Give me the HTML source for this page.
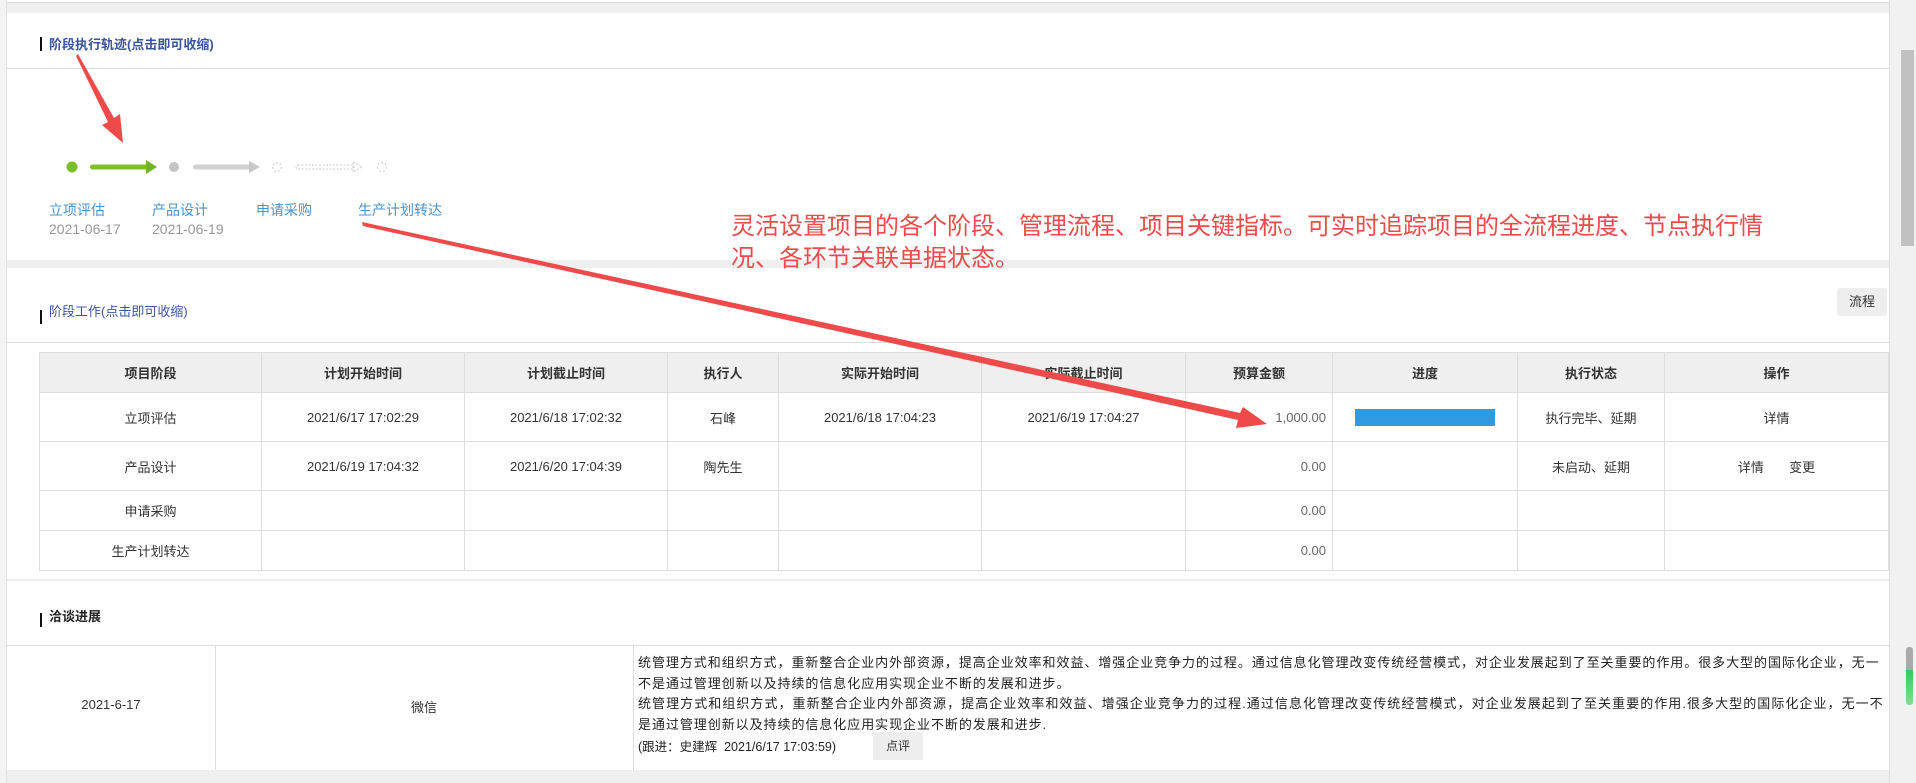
<!DOCTYPE html>
<html><head><meta charset="utf-8"><style>
*{margin:0;padding:0;box-sizing:border-box}
body{width:1916px;height:783px;background:#efefef;position:relative;overflow:hidden;font-family:"Liberation Sans","Noto Sans CJK SC",sans-serif;font-size:13px;color:#333}
.a{position:absolute}
.panel{position:absolute;left:7px;width:1882px;background:#fff}
.bar{position:absolute;width:2px;background:#111}
table{position:absolute;border-collapse:collapse;table-layout:fixed}
td,th{border:1px solid #ddd;text-align:center;font-size:13px;color:#333}
th{background:#efefef;font-weight:bold}
</style></head><body>
<div class="a" style="left:0;top:0;width:1889px;height:3px;background:#fff;border-bottom:1px solid #ddd"></div>
<div class="a" style="left:0;top:0;width:7px;height:783px;background:#f3f3f3;border-right:1px solid #e2e2e2"></div>

<div class="panel" style="top:13px;height:247px">
 <div class="a" style="left:0;top:55px;width:100%;height:1px;background:#ddd"></div>
</div>
<div class="bar" style="left:40px;top:37px;height:14px"></div>
<div class="a" style="left:49px;top:34px;font-size:13px;font-weight:bold;color:#3a55a0">阶段执行轨迹(点击即可收缩)</div>
<svg class="a" style="left:60px;top:155px" width="340" height="24">
 <circle cx="12" cy="12" r="5.5" fill="#7cbf2a"/>
 <rect x="30" y="9.5" width="58" height="5" rx="2.5" fill="#7cbf2a"/>
 <polygon points="86,5 97,12 86,19" fill="#6fb51e"/>
 <circle cx="114" cy="12" r="5" fill="#c4c4c4"/>
 <rect x="133" y="9.5" width="58" height="5" rx="2.5" fill="#d0d0d0"/>
 <polygon points="189,6 200,12 189,18" fill="#c8c8c8"/>
 <circle cx="217" cy="12" r="4.5" fill="none" stroke="#ccc" stroke-dasharray="2,2"/>
 <rect x="236" y="10" width="58" height="4" rx="2" fill="none" stroke="#ccc" stroke-dasharray="2,1.5"/>
 <polygon points="293,7 302,12 293,17" fill="none" stroke="#ccc" stroke-dasharray="2,1.5"/>
 <circle cx="322" cy="12" r="4.5" fill="none" stroke="#ccc" stroke-dasharray="2,2"/>
</svg>
<div class="a" style="left:49px;top:201px;font-size:14px;color:#4a93cf;line-height:19px">立项评估<br><span style="color:#999">2021-06-17</span></div>
<div class="a" style="left:152px;top:201px;font-size:14px;color:#4a93cf;line-height:19px">产品设计<br><span style="color:#999">2021-06-19</span></div>
<div class="a" style="left:256px;top:201px;font-size:14px;color:#4a93cf;line-height:19px">申请采购</div>
<div class="a" style="left:358px;top:201px;font-size:14px;color:#4a93cf;line-height:19px">生产计划转达</div>

<div class="panel" style="top:268px;height:311px">
 <div class="a" style="left:0;top:74px;width:100%;height:1px;background:#ddd"></div>
</div>
<div class="bar" style="left:40px;top:310px;height:14px"></div>
<div class="a" style="left:49px;top:301px;font-size:13px;color:#3a55a0">阶段工作(点击即可收缩)</div>
<div class="a" style="left:1837px;top:288px;width:50px;height:28px;background:#eee;border-radius:3px;text-align:center;line-height:28px;font-size:13px">流程</div>
<table style="left:39px;top:352px;width:1849px">
<colgroup><col style="width:222px"><col style="width:203px"><col style="width:203px"><col style="width:111px"><col style="width:203px"><col style="width:204px"><col style="width:147px"><col style="width:185px"><col style="width:147px"><col style="width:224px"></colgroup>
<tr style="height:40px"><th>项目阶段</th><th>计划开始时间</th><th>计划截止时间</th><th>执行人</th><th>实际开始时间</th><th>实际截止时间</th><th>预算金额</th><th>进度</th><th>执行状态</th><th>操作</th></tr>
<tr style="height:49px"><td>立项评估</td><td>2021/6/17 17:02:29</td><td>2021/6/18 17:02:32</td><td>石峰</td><td>2021/6/18 17:04:23</td><td>2021/6/19 17:04:27</td><td style="text-align:right;padding-right:6px;color:#666">1,000.00</td><td><div style="margin:0 auto;width:140px;height:17px;background:#2e9be0"></div></td><td>执行完毕、延期</td><td>详情</td></tr>
<tr style="height:49px"><td>产品设计</td><td>2021/6/19 17:04:32</td><td>2021/6/20 17:04:39</td><td>陶先生</td><td></td><td></td><td style="text-align:right;padding-right:6px;color:#666">0.00</td><td></td><td>未启动、延期</td><td>详情&nbsp;&nbsp;&nbsp;&nbsp;&nbsp;&nbsp;&nbsp;变更</td></tr>
<tr style="height:40px"><td>申请采购</td><td></td><td></td><td></td><td></td><td></td><td style="text-align:right;padding-right:6px;color:#666">0.00</td><td></td><td></td><td></td></tr>
<tr style="height:40px"><td>生产计划转达</td><td></td><td></td><td></td><td></td><td></td><td style="text-align:right;padding-right:6px;color:#666">0.00</td><td></td><td></td><td></td></tr>
</table>

<div class="panel" style="top:581px;height:189px">
 <div class="a" style="left:0;top:64px;width:100%;height:1px;background:#ddd"></div>
 <div class="a" style="left:208px;top:64px;width:1px;height:125px;background:#ddd"></div>
 <div class="a" style="left:626px;top:64px;width:1px;height:125px;background:#ddd"></div>
</div>
<div class="bar" style="left:40px;top:613px;height:14px"></div>
<div class="a" style="left:49px;top:606px;font-size:13px;font-weight:bold;color:#222">洽谈进展</div>
<div class="a" style="left:7px;top:697px;width:208px;text-align:center;font-size:13px">2021-6-17</div>
<div class="a" style="left:215px;top:697px;width:418px;text-align:center;font-size:13px">微信</div>
<div class="a" style="left:638px;top:653px;width:1252px;font-size:13px;letter-spacing:0.95px;line-height:20.5px;color:#222;white-space:nowrap">统管理方式和组织方式，重新整合企业内外部资源，提高企业效率和效益、增强企业竞争力的过程。通过信息化管理改变传统经营模式，对企业发展起到了至关重要的作用。很多大型的国际化企业，无一<br>不是通过管理创新以及持续的信息化应用实现企业不断的发展和进步。<br><span style="letter-spacing:1.05px">统管理方式和组织方式，重新整合企业内外部资源，提高企业效率和效益、增强企业竞争力的过程.通过信息化管理改变传统经营模式，对企业发展起到了至关重要的作用.很多大型的国际化企业，无一不</span><br>是通过管理创新以及持续的信息化应用实现企业不断的发展和进步.</div>
<div class="a" style="left:638px;top:736px;font-size:12.5px;color:#222">(跟进：史建辉&nbsp;&nbsp;2021/6/17 17:03:59)</div>
<div class="a" style="left:873px;top:732px;width:50px;height:28px;background:#eee;text-align:center;line-height:28px;font-size:12px">点评</div>

<div class="a" style="left:731px;top:211px;font-size:24px;color:#ee4a4a;line-height:32px;width:1150px;white-space:nowrap">灵活设置项目的各个阶段、管理流程、项目关键指标。可实时追踪项目的全流程进度、节点执行情<br>况、各环节关联单据状态。</div>

<div class="a" style="left:1889px;top:0;width:27px;height:783px;background:#f1f1f1;border-left:1px solid #ddd"></div>
<div class="a" style="left:1901px;top:50px;width:13px;height:196px;background:#c1c1c1"></div>
<div class="a" style="left:1906px;top:647px;width:7px;height:58px;border-radius:3px;background:linear-gradient(#aaa 0,#aaa 40%,#3cc85a 40%,#7ee08c 100%)"></div>

<svg class="a" style="left:0;top:0" width="1916" height="783">
 <polygon points="76,56 78,54 114,118 120,114 123,143 102,125 108,122" fill="#ee4a4a"/>
 <polygon points="362,222 363,226 1238,420 1236,428 1267,424 1243,407 1240,413" fill="#ee4a4a"/>
</svg>
</body></html>
